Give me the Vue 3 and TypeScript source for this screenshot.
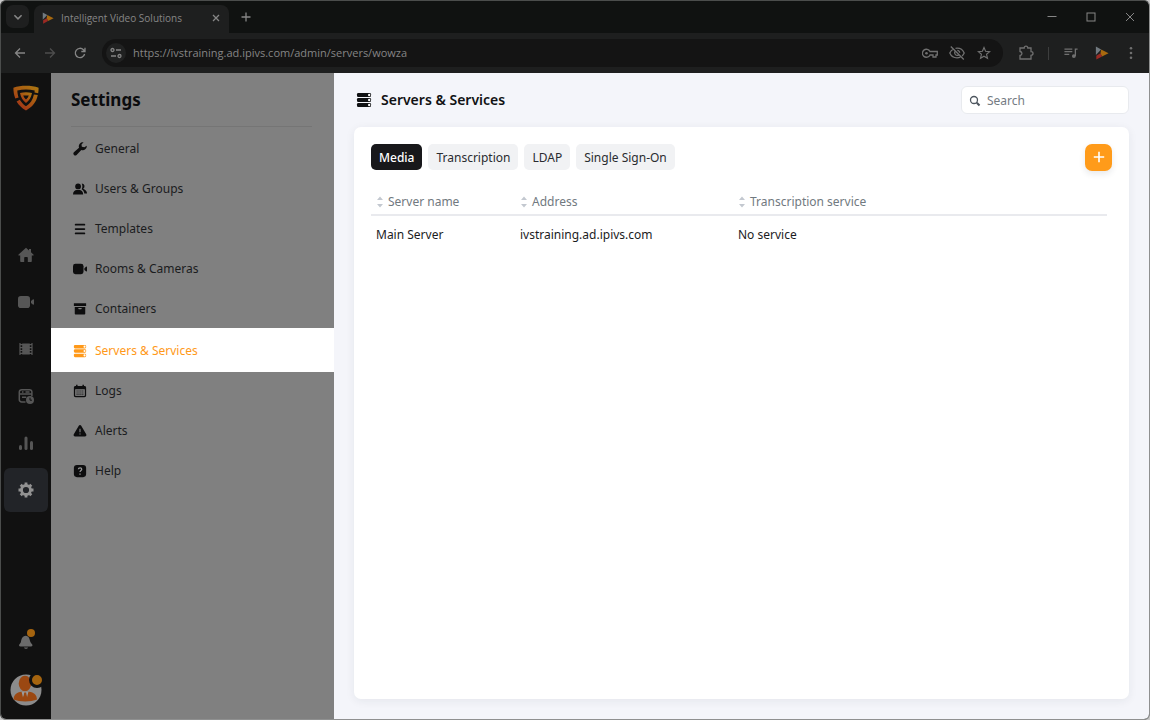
<script setup lang="ts">
import { ref } from 'vue'

interface IconItem {
  id: string
  label: string
}

const railItems: IconItem[] = [
  { id: 'home', label: 'Home' },
  { id: 'camera', label: 'Cameras' },
  { id: 'film', label: 'Recordings' },
  { id: 'schedule', label: 'Schedule' },
  { id: 'stats', label: 'Statistics' },
  { id: 'gear', label: 'Settings' },
]

const menuItems: IconItem[] = [
  { id: 'wrench', label: 'General' },
  { id: 'users', label: 'Users & Groups' },
  { id: 'lines', label: 'Templates' },
  { id: 'camera', label: 'Rooms & Cameras' },
  { id: 'box', label: 'Containers' },
  { id: 'servers', label: 'Servers & Services' },
  { id: 'calendar', label: 'Logs' },
  { id: 'alert', label: 'Alerts' },
  { id: 'help', label: 'Help' },
]

const tabs: string[] = ['Media', 'Transcription', 'LDAP', 'Single Sign-On']
const columns: string[] = ['Server name', 'Address', 'Transcription service']
const rows: string[][] = [['Main Server', 'ivstraining.ad.ipivs.com', 'No service']]

const activeRail = ref('gear')
const activeMenu = ref('servers')
const activeTab = ref('Media')
const query = ref('')
const url = ref('https://ivstraining.ad.ipivs.com/admin/servers/wowza')
</script>

<template>
  <svg class="defs" aria-hidden="true">
    <symbol id="i-home" viewBox="0 0 16 16"><path d="M8 .8.6 7.500c-.5.5-.2 1.100.4 1.100H2.200V14c0 .7.4 1.100 1.100 1.100h2.900v-4.300c0-.5.3-.8.8-.8h2c.5 0 .8.3.8.8v4.300h2.900c.7 0 1.100-.4 1.100-1.100V8.600H15c.6 0 .9-.6.4-1.100L13 5.300V2h-2v1.500z" /></symbol>
    <symbol id="i-camera" viewBox="0 0 16 16"><rect x="0" y="2" width="12" height="12" rx="2.800" /><path d="M13 7 14.800 5.400c.6-.5 1.200-.2 1.200.6v4c0 .8-.6 1.100-1.200.6L13 9z" /></symbol>
    <symbol id="i-film" viewBox="0 0 16 16"><path d="M4.200 2.500h7.600v11H4.200z" /><path d="M2 2v12M14 2v12" stroke="currentColor" stroke-width="1.200" /><path d="M2 3.700h12M2 6.600h12M2 9.500h12M2 12.400h12" stroke="currentColor" stroke-width="1.200" /></symbol>
    <symbol id="i-schedule" viewBox="0 0 16 16">
      <path d="M7.500 14H3.600A2.300 2.300 0 0 1 1.300 11.700V4A2.300 2.300 0 0 1 3.600 1.700h8A2.300 2.300 0 0 1 13.900 4v4M1.500 6.100h12.300M4 9.300h4.200M4 4h1.500M7.500 4h4" fill="none" stroke="currentColor" stroke-width="1.500" />
      <circle cx="12" cy="12" r="4" /><path d="M12 9.700v2.500h2" fill="none" stroke="#111" stroke-width="1" />
    </symbol>
    <symbol id="i-stats" viewBox="0 0 16 16"><rect x="1" y="10" width="3" height="5" rx="1.500" /><rect x="6.500" y="1.500" width="3" height="13.500" rx="1.500" /><rect x="12" y="6" width="3" height="9" rx="1.500" /></symbol>
    <symbol id="i-gear" viewBox="0 0 16 16">
      <circle cx="8" cy="8" r="4.500" fill="none" stroke="currentColor" stroke-width="2.800" />
      <path d="M8 .5v3M8 12.500v3M.5 8h3M12.500 8h3M2.700 2.700l2 2M11.300 11.300l2 2M13.300 2.700l-2 2M4.700 11.300l-2 2" stroke="currentColor" stroke-width="2.800" />
    </symbol>
    <symbol id="i-wrench" viewBox="0 0 16 16"><path d="M15.700 4.200a4.600 4.600 0 0 1-6.200 4.900L4.100 14.900A2.200 2.200 0 0 1 1 11.800l5.900-5.300A4.600 4.600 0 0 1 12.100.4L9.700 2.900l.4 2.600 2.900.5z" /></symbol>
    <symbol id="i-users" viewBox="0 0 16 16"><circle cx="5.800" cy="5" r="3.300" /><path d="M0 14.200c0-3 2-5 4.300-5h3c2.400 0 4.300 2 4.300 5zM10 1.700a3.200 3.200 0 0 1 1.700 5.900L14 9c1.200.9 2 2 2 4h-3.100c-.3-2-1.300-3.700-3-4.700 1-1.500 1.200-4.500.1-6.600z" /></symbol>
    <symbol id="i-lines" viewBox="0 0 16 16"><path d="M3 3h10M3 8h10M3 13h10" stroke="currentColor" stroke-width="2" stroke-linecap="round" /></symbol>
    <symbol id="i-box" viewBox="0 0 16 16"><path fill-rule="evenodd" d="M1 1.300h14v3.300H1zM2 5.600h12V13c0 .8-.5 1.300-1.300 1.300H3.300C2.500 14.300 2 13.800 2 13zm4 1.300c0 1 .5 1.500 1.300 1.500h1.400c.8 0 1.300-.5 1.300-1.500z" /></symbol>
    <symbol id="i-servers" viewBox="0 0 16 16">
      <rect x="1" y="1" width="14" height="4" rx="1.300" /><rect x="1" y="6" width="14" height="4" rx="1.300" /><rect x="1" y="11" width="14" height="4" rx="1.300" />
      <g fill="#fff"><circle cx="13.200" cy="3" r="1.200" /><circle cx="13.200" cy="8" r="1.200" /><circle cx="13.200" cy="13" r="1.200" /></g>
    </symbol>
    <symbol id="i-calendar" viewBox="0 0 16 16"><path fill-rule="evenodd" d="M3.500.8h1.700v1.400h5.600V.8h1.700v1.400h.7c1 0 1.800.8 1.800 1.800v9c0 1.200-.8 2-2 2H3c-1.200 0-2-.8-2-2V4c0-1 .8-1.800 1.800-1.800h.7zM2.500 6v6.900c0 .4.300.7.700.7h9.600c.4 0 .7-.3.700-.7V6z" /><path d="M4 8h8M4 10.200h8M4 12.300h8" stroke="currentColor" stroke-width="1.200" stroke-dasharray="1.300 .9" /></symbol>
    <symbol id="i-alert" viewBox="0 0 16 16"><path d="M6.600 1.900c.6-1.100 2.200-1.100 2.800 0l5.700 9.900c.7 1.200-.1 2.500-1.500 2.500H2.400c-1.400 0-2.200-1.300-1.500-2.500z" /><path d="M8 5.500v4M8 10.800v1.300" stroke="#808080" stroke-width="1.300" /></symbol>
    <symbol id="i-help" viewBox="0 0 16 16"><rect x="1" y="1" width="14" height="14" rx="3.500" /><path d="M6.100 6c.2-2.200 3.900-2.200 3.900 0C10 7.500 8 7.300 8 9.200M8 10.800v1.400" fill="none" stroke="#999" stroke-width="1.400" /></symbol>
    <symbol id="i-play" viewBox="0 0 16 16"><path d="M1 .5v9.700L7 4z" fill="#727a80" /><path d="M7 4 15.500 8.200 8 12l-1.800-3.800z" fill="#a8690f" /><path d="M1.500 15.500V11L6.200 8.200 8 12z" fill="#9b2a24" /></symbol>
  </svg>

  <div class="window">
    <header class="titlebar">
      <button class="tab-search" aria-label="Search tabs"><svg viewBox="0 0 10 10"><path d="m2 3.500 3 3 3-3" class="line bold" /></svg></button>
      <div class="browser-tab">
        <svg class="favicon"><use href="#i-play" /></svg>
        <span class="tab-title">Intelligent Video Solutions</span>
        <button aria-label="Close tab"><svg class="s10" viewBox="0 0 10 10"><path d="m2 2 6 6M8 2 2 8" class="line bold" /></svg></button>
      </div>
      <button class="new-tab" aria-label="New tab"><svg class="s10" viewBox="0 0 10 10"><path d="M5 .5v9M.5 5h9" class="line bold" /></svg></button>
      <div class="window-buttons">
        <button aria-label="Minimize"><svg class="s10" viewBox="0 0 10 10"><path d="M.5 4.500h9" class="line" /></svg></button>
        <button aria-label="Maximize"><svg class="s10" viewBox="0 0 10 10"><rect x="1" y="1" width="8" height="8" class="line" /></svg></button>
        <button aria-label="Close"><svg class="s10" viewBox="0 0 10 10"><path d="m1 1 8 8M9 1 1 9" class="line" /></svg></button>
      </div>
    </header>

    <div class="toolbar">
      <button class="tool" aria-label="Back"><svg class="s12" viewBox="0 0 12 12"><path d="M11 6H1.500M6 1.500 1.500 6 6 10.500" class="line bold" /></svg></button>
      <button class="tool faded" aria-label="Forward"><svg class="s12" viewBox="0 0 12 12"><path d="M1 6h9.500M6 1.500 10.500 6 6 10.500" class="line bold" /></svg></button>
      <button class="tool" aria-label="Reload"><svg class="s12" viewBox="0 0 12 12"><path d="M10.600 7A4.700 4.700 0 1 1 9.400 2.700L11 4.300M11 .8v3.700H7.300" class="line bold" /></svg></button>
      <div class="address">
        <button class="site-info" aria-label="Site information"><svg class="s12" viewBox="0 0 12 12"><circle cx="2.500" cy="3" r="1.500" class="line bold" /><path d="M6 3h5M1 9h5" class="line bold" /><circle cx="9.500" cy="9" r="1.500" class="line bold" /></svg></button>
        <input v-model="url" class="url" type="text" aria-label="Address bar" spellcheck="false" />
        <button class="mark" aria-label="Passwords"><svg class="s16" viewBox="0 0 16 16"><path d="M8 6.500A4 4 0 1 0 8 10h3v2h3v-2h1.300V6.500z" class="line bold" /><circle cx="4.500" cy="8.200" r="1.300" fill="currentColor" /></svg></button>
        <button class="mark" aria-label="Third-party cookies blocked"><svg class="s16" viewBox="0 0 16 16"><path d="M4.700 4C2.800 4.900 1.500 6.300.8 8c1.300 3 4 4.800 7.200 4.800 1.200 0 2.300-.2 3.300-.7M6.500 3.300C10.500 2.700 13.800 4.700 15.200 8c-.5 1.100-1.200 2.100-2.100 2.900M6 6.300A2.700 2.700 0 0 0 9.700 10M8.300 5.300a2.700 2.700 0 0 1 2.400 2.500M1.800 1.500l13 13" class="line bold" /></svg></button>
        <button class="mark" aria-label="Bookmark"><svg class="s14" viewBox="0 0 16 16"><path d="m8 1.800 1.800 4.300 4.700.4-3.600 3 1.100 4.600-4-2.500-4 2.500 1.100-4.600-3.600-3 4.700-.4z" class="line bold" /></svg></button>
      </div>
      <button class="tool dim" aria-label="Extensions"><svg class="s16" viewBox="0 0 16 16"><path d="M2 3h4.200c0-2.600 3.600-2.600 3.600 0H13v3.700c2.700 0 2.700 3.600 0 3.600V14H2v-3.500c2.600-.3 2.600-3.700 0-4z" class="line bold" /></svg></button>
      <span class="divider"></span>
      <button class="tool dim" aria-label="Media controls"><svg class="s14" viewBox="0 0 16 16"><path d="M.5 3.500h9M.5 6.500h9M.5 9.500H6M15.500 3.500H13v8" class="line thick-note" /><circle cx="11.300" cy="11.500" r="2.200" fill="currentColor" /></svg></button>
      <button class="profile" aria-label="Intelligent Video Solutions"><svg class="s14"><use href="#i-play" /></svg></button>
      <button class="more" aria-label="Menu"><svg class="s14" viewBox="0 0 14 14" fill="currentColor"><circle cx="7" cy="2.200" r="1.300" /><circle cx="7" cy="7" r="1.300" /><circle cx="7" cy="11.800" r="1.300" /></svg></button>
    </div>

    <div class="app">
      <aside class="rail">
        <a class="logo" href="#" aria-label="Home page">
          <svg viewBox="0 0 26 26">
            <defs><linearGradient id="shield" x1="1" y1="0" x2=".2" y2="1"><stop offset="0" stop-color="#ab7a12" /><stop offset=".5" stop-color="#a95a12" /><stop offset="1" stop-color="#a12c18" /></linearGradient></defs>
            <path d="M2.300 13.500C.9 9.800.4 6.500.4 2.700 8 .1 18 .1 25.600 2.700c0 2-.1 3.700-.4 5.500L21.500 7.500l.2-2C16.200 4 9.800 4 4.300 5.500c.1 2.600.5 4.700 1.300 7zM24.800 10C23.400 17 19.400 22 13 25.500 8.900 23.300 5.800 20.300 3.600 16.500l3.200-1.800c1.500 2.600 3.500 4.800 6.200 6.500 4.300-2.700 6.800-6.500 7.900-11.800z" fill="url(#shield)" />
            <path fill-rule="evenodd" d="M7 8c4-.9 8-.9 12 0-.8 4.500-2.700 7.500-6 9.900C9.700 15.500 7.800 12.500 7 8zm3.200 2.400c.6 1.600 1.500 2.900 2.800 4 1.300-1.100 2.200-2.400 2.800-4z" fill="url(#shield)" />
          </svg>
        </a>
        <nav class="rail-nav" aria-label="Sections">
          <button v-for="item in railItems" :key="item.id" class="rail-button" :class="{ active: item.id === activeRail }" :aria-label="item.label" @click="activeRail = item.id">
            <svg class="s16"><use :href="'#i-' + item.id" /></svg>
          </button>
        </nav>
        <div class="rail-foot">
          <button class="bell" aria-label="Notifications">
            <svg viewBox="0 0 16 16"><path d="M5.500 2.500c2-1.600 4.900-.8 5.700 1.700l1 3.300c.3 1 .8 1.700 1.600 2.400 1.200 1.100.7 2.600-.8 2.600H2.500c-1.500 0-2-1.500-.8-2.600.8-.7 1.100-1.400 1.300-2.400C3.400 5.500 3.700 3.800 5.500 2.500zM6 13.500h4c-.3 1.800-3.700 1.800-4 0z" fill="#6b6b6b" /></svg>
            <span class="badge"></span>
          </button>
          <button class="avatar" aria-label="Account">
            <svg viewBox="0 0 32 32"><circle cx="16" cy="16" r="15.500" fill="#8c8c8c" /><ellipse cx="15" cy="9.500" rx="6.300" ry="7.700" fill="#9b4812" /><path d="M3.500 25.500c.5-5 3-7 8-7.800h7.500c5 .8 7.500 2.800 8 7.800-6 2.500-17.500 2.500-23.500 0z" fill="#9b4812" /><path d="m11.500 17.500 1.500 6 2-4.500 2 4.500 1.500-6z" fill="#9a9a9a" /><path d="M14.300 18.500h1.800l1.200 6h-4.200z" fill="#9b4812" /></svg>
            <span class="badge large"></span>
          </button>
        </div>
      </aside>

      <section class="settings">
        <h1>Settings</h1>
        <nav class="menu" aria-label="Settings">
          <a v-for="item in menuItems" :key="item.id" href="#" class="menu-item" :class="{ active: item.id === activeMenu }" @click.prevent="activeMenu = item.id">
            <svg class="s14"><use :href="'#i-' + item.id" /></svg>{{ item.label }}
          </a>
        </nav>
      </section>

      <main class="content">
        <div class="heading">
          <svg class="s16"><use href="#i-servers" /></svg>
          <h2>Servers &amp; Services</h2>
          <label class="search">
            <svg class="s12" viewBox="0 0 12 12"><circle cx="5" cy="5" r="3.500" class="line bold" /><path d="m7.800 7.800 2.700 2.700" class="line thick" /></svg>
            <input v-model="query" type="search" placeholder="Search" aria-label="Search" />
          </label>
        </div>
        <section class="card">
          <div class="card-bar">
            <button v-for="tab in tabs" :key="tab" class="pill" :class="{ active: tab === activeTab }" @click="activeTab = tab">{{ tab }}</button>
            <button class="add" aria-label="Add server"><svg class="s12" viewBox="0 0 12 12"><path d="M6 .8v10.400M.8 6h10.400" class="line plus" /></svg></button>
          </div>
          <table>
            <thead>
              <tr>
                <th v-for="column in columns" :key="column" scope="col">
                  <button class="sort"><svg viewBox="0 0 8 12"><path d="M4 .5 7 4H1zM4 11.500 1 8h6z" fill="#c3c8d0" /></svg>{{ column }}</button>
                </th>
              </tr>
            </thead>
            <tbody>
              <tr v-for="row in rows" :key="row[0]"><td v-for="cell in row" :key="cell">{{ cell }}</td></tr>
            </tbody>
          </table>
        </section>
      </main>
    </div>
  </div>
</template>

<style>
body { background: #c8c8c8; }
</style>

<style scoped>
* { box-sizing: border-box; }
.defs { position: absolute; width: 0; height: 0; }
.window {
  display: flex;
  flex-direction: column;
  min-height: 100vh;
  overflow: hidden;
  border: 1px solid #8f9090;
  border-top-color: #4b4d4c;
  border-left-color: #4b4d4c;
  border-radius: 6px;
  background: #101211;
  color: #1b1c1e;
  font: 12px/18px "Noto Sans", "Open Sans", sans-serif;
}
button, input { font: inherit; color: inherit; }
button { display: flex; align-items: center; justify-content: center; padding: 0; border: 0; background: none; cursor: pointer; }
a { color: inherit; text-decoration: none; }
svg { display: block; flex: none; fill: currentColor; }
.line { fill: none; stroke: currentColor; stroke-width: 1; }
.bold { stroke-width: 1.3; }
.thick { stroke-width: 2; }
.plus { stroke-width: 1.6; }
.thick-note { stroke-width: 1.5; }
.s10 { width: 10px; height: 10px; }
.s12 { width: 12px; height: 12px; }
.s14 { width: 14px; height: 14px; }
.s16 { width: 16px; height: 16px; }

.titlebar { display: flex; align-items: flex-end; height: 32px; padding-left: 5px; color: #868686; font-family: "Open Sans", "Noto Sans", sans-serif; }
.tab-search { width: 23px; height: 23px; margin: 0 5px 5px 0; border-radius: 7px; background: #1e1f1f; }
.tab-search svg { width: 12px; height: 12px; }
.browser-tab { display: flex; align-items: center; width: 195px; height: 28px; padding: 0 8px 2px; border-radius: 8px 8px 0 0; background: #1e1f1f; font-size: 10px; }
.favicon { width: 12px; height: 12px; margin-right: 7px; }
.tab-title { flex: 1; white-space: nowrap; }
.new-tab { width: 34px; height: 32px; }
.window-buttons { display: flex; margin-left: auto; }
.window-buttons button { width: 39px; height: 32px; }

.toolbar { display: flex; align-items: center; height: 40px; padding-left: 4px; background: #1e1f1f; color: #858585; }
.tool { width: 30px; height: 30px; }
.profile { width: 32px; height: 30px; }
.faded { color: #4d4d4d; }
.address { display: flex; flex: 1; align-items: center; height: 28px; margin: 0 8px 0 7px; padding: 0 6px 0 4px; border-radius: 14px; background: #141414; }
.site-info { width: 20px; height: 20px; margin-right: 7px; border-radius: 50%; background: #202121; }
.url { flex: 1; min-width: 0; padding: 0; border: 0; outline: 0; background: none; font: 11px/18px "Open Sans", "Noto Sans", sans-serif; }
.mark { width: 27px; height: 28px; }
.mark, .dim, .more { color: #707070; }
.divider { width: 1px; height: 13px; margin: 0 7px; background: #3d3e3e; }
.more { width: 25px; height: 30px; margin-right: 6px; }

.app { display: flex; flex: 1; background: #f4f5fa; }
.rail { display: flex; flex-direction: column; align-items: center; justify-content: space-between; width: 50px; background: #111; }
.logo { height: 50px; padding-top: 12px; }
.logo svg { width: 26px; height: 26px; }
.rail-nav { display: flex; flex-direction: column; gap: 3px; }
.rail-button { width: 44px; height: 44px; border-radius: 6px; color: #565656; }
.rail-button.active { background: #222428; color: #929292; }
.rail-foot { display: flex; flex-direction: column; align-items: center; gap: 21px; padding: 10px 0 13px; }
.bell, .avatar { position: relative; width: 32px; height: 32px; }
.bell { height: 22px; }
.bell svg { width: 16px; height: 16px; }
.avatar svg { width: 32px; height: 32px; }
.badge { position: absolute; top: -2px; right: 7px; width: 8px; height: 8px; border-radius: 50%; background: #a5640f; }
.badge.large { box-sizing: content-box; top: -2px; right: -3px; width: 10px; height: 10px; border: 3px solid #111; }

.settings { width: 283px; background: #808080; }
h1, h2 { margin: 0; }
h1 { margin: 0 22px 0 20px; padding: 15px 0 14px; border-bottom: 1px solid #757575; color: #0b0c0e; font-size: 17px; font-weight: 700; line-height: 24px; }
.menu { padding-top: 1px; }
.menu-item { display: flex; align-items: center; gap: 8px; height: 40px; padding: 2px 0 0 22px; }
.menu-item svg { color: #0d0d0e; }
.menu-item.active { height: 44px; margin-bottom: -2px; background: #fff; color: #ff9919; }
.menu-item.active svg { color: #ff9919; }

.content { display: flex; flex: 1; flex-direction: column; min-width: 0; padding: 13px 20px 20px; }
.heading { display: flex; align-items: center; gap: 9px; margin-bottom: 13px; padding-left: 2px; color: #111214; }
h2 { font-size: 14px; font-weight: 600; line-height: 20px; }
.search { display: flex; align-items: center; gap: 6px; width: 168px; height: 28px; margin-left: auto; padding: 1px 8px 0 7px; border: 1px solid #e8eaee; border-radius: 6px; background: #fff; color: #4d555e; }
.search input { flex: 1; min-width: 0; padding: 0; border: 0; outline: 0; background: none; }
.search input::placeholder { color: #747b83; opacity: 1; }
.card { flex: 1; padding: 16px 17px 20px; border-radius: 7px; background: #fff; box-shadow: 0 2px 10px rgba(30, 40, 60, 0.07); }
.card-bar { display: flex; align-items: center; gap: 6px; height: 28px; margin-bottom: 17px; }
.pill { height: 26px; padding: 1px 8px 0; border-radius: 5px; background: #f1f2f4; color: #2a2c30; }
.pill.active { background: #18181b; color: #fff; font-weight: 500; }
.add { width: 27px; height: 27px; margin-left: auto; border-radius: 7px; background: #ff9b1a; color: #fff; box-shadow: 0 3px 6px rgba(30, 40, 60, 0.1); }
table { width: calc(100% - 5px); border-collapse: collapse; table-layout: fixed; }
th { padding: 5px 5px 3px; border-bottom: 2px solid #e9eaee; text-align: left; font-weight: 400; }
th:nth-child(1) { width: 144px; }
th:nth-child(2) { width: 218px; }
.sort { gap: 4px; color: #717980; }
.sort svg { width: 8px; height: 12px; }
td { padding: 10px 5px; }
</style>
